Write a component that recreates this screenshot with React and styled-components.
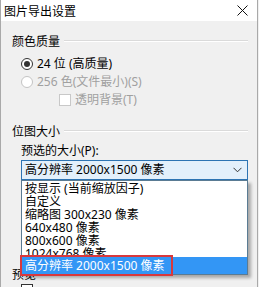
import React from 'react';
import styled, { createGlobalStyle } from 'styled-components';

const listItems = [
  '按显示 (当前缩放因子)',
  '自定义',
  '缩略图 300x230 像素',
  '640x480 像素',
  '800x600 像素',
];

const App = () => {
  return (
    <Window>
      <GlobalStyle />
      <TitleBar>
        <Title>图片导出设置</Title>
        <CloseIcon width="11" height="11" viewBox="0 0 11 11">
          <path d="M0.5 0.5 L10.5 10.5 M10.5 0.5 L0.5 10.5" stroke="#111" strokeWidth="1" fill="none" />
        </CloseIcon>
      </TitleBar>

      <Body>
        <GroupHeader>
          <GroupLabel>颜色质量</GroupLabel>
          <GroupLine />
        </GroupHeader>
        <Indent>
          <OptionRow>
            <Radio checked />
            <OptionText>24 位 (高质量)</OptionText>
          </OptionRow>
          <OptionRow>
            <Radio disabled />
            <OptionText disabled>256 色(文件最小)(S)</OptionText>
          </OptionRow>
          <OptionRow indent={38}>
            <CheckBox disabled />
            <OptionText disabled>透明背景(T)</OptionText>
          </OptionRow>
        </Indent>

        <GroupHeader top={15}>
          <GroupLabel>位图大小</GroupLabel>
          <GroupLine />
        </GroupHeader>
        <Indent>
          <FieldLabel>预选的大小(P):</FieldLabel>
          <ComboWrap>
            <Combo>
              <ComboText>高分辨率 2000x1500 像素</ComboText>
              <svg width="9" height="6" viewBox="0 0 9 6">
                <path d="M0.5 0.8 L4.5 4.8 L8.5 0.8" stroke="#333" strokeWidth="1" fill="none" />
              </svg>
            </Combo>
            <Popup>
              {listItems.map((item) => (
                <ListRow key={item}>{item}</ListRow>
              ))}
              <ListRow clipped>1024x768 像素</ListRow>
              <ListRow selected>高分辨率 2000x1500 像素</ListRow>
              <Marker />
            </Popup>
          </ComboWrap>
        </Indent>

        <GroupHeader top={87}>
          <GroupLabel>预览</GroupLabel>
          <GroupLine />
        </GroupHeader>
        <Indent top={-1}>
          <OptionRow>
            <CheckBox />
          </OptionRow>
        </Indent>
      </Body>
    </Window>
  );
};

export default App;

const GlobalStyle = createGlobalStyle`
  body {
    margin: 0;
    background: #f0f0f0;
    font-family: "Noto Sans", "Noto Sans CJK SC", sans-serif;
  }
`;

const Window = styled.div`
  width: 258px;
  height: 287px;
  box-sizing: border-box;
  border-left: 1px solid #a9a9a9;
  border-right: 1px solid #a9a9a9;
  background: #f0f0f0;
  overflow: hidden;
  display: flex;
  flex-direction: column;
  font-size: 12px;
  color: #000;
`;

const TitleBar = styled.div`
  height: 21px;
  flex-shrink: 0;
  background: #fff;
  display: flex;
  align-items: center;
  justify-content: space-between;
  padding: 0 9px 0 3px;
`;

const Title = styled.span`
  font-size: 12px;
  line-height: 14px;
  font-family: "Noto Sans CJK SC", sans-serif;
`;

const CloseIcon = styled.svg`
  display: block;
`;

const Body = styled.div`
  padding: 13px 9px 0 11px;
`;

const GroupHeader = styled.div`
  display: flex;
  align-items: center;
  gap: 4px;
  height: 14px;
  margin-top: ${(p) => p.top || 0}px;
`;

const GroupLabel = styled.span`
  font-family: "Noto Sans CJK SC", sans-serif;
  font-size: 12px;
  line-height: 14px;
`;

const GroupLine = styled.div`
  flex: 1;
  border-top: 1px solid #dadada;
  border-bottom: 1px solid #fff;
`;

const Indent = styled.div`
  padding-left: 9px;
  padding-top: ${(p) => (p.top !== undefined ? p.top : 7)}px;
`;

const OptionRow = styled.div`
  display: flex;
  align-items: center;
  gap: 4px;
  height: 18px;
  padding-left: ${(p) => p.indent || 0}px;
`;

const Radio = styled.span`
  width: 12px;
  height: 12px;
  box-sizing: border-box;
  border-radius: 50%;
  border: 1px solid ${(p) => (p.disabled ? '#c4c4c4' : '#333')};
  background: #fff;
  display: flex;
  align-items: center;
  justify-content: center;
  &::after {
    content: '';
    width: 6px;
    height: 6px;
    border-radius: 50%;
    background: ${(p) => (p.checked ? '#333' : 'transparent')};
  }
`;

const CheckBox = styled.span`
  width: 12px;
  height: 12px;
  box-sizing: border-box;
  border: 1px solid ${(p) => (p.disabled ? '#c8c8c8' : '#333')};
  background: #fff;
`;

const OptionText = styled.span`
  line-height: 14px;
  color: ${(p) => (p.disabled ? '#a0a0a0' : '#000')};
`;

const FieldLabel = styled.div`
  height: 14px;
  line-height: 14px;
  margin-top: -1px;
`;

const ComboWrap = styled.div`
  position: relative;
  margin-top: 2px;
`;

const Combo = styled.div`
  height: 20px;
  box-sizing: border-box;
  border: 1px solid #2d74b3;
  background: #e3f0fb;
  display: flex;
  align-items: center;
  justify-content: space-between;
  padding: 0 5px 0 3px;
`;

const ComboText = styled.span`
  line-height: 14px;
`;

const Popup = styled.div`
  position: absolute;
  top: 100%;
  left: 0;
  right: 0;
  box-sizing: border-box;
  border: 1px solid #5a7b93;
  background: #fff;
  padding-top: 1px;
  box-shadow: 3px 3px 3px rgba(0, 0, 0, 0.3);
`;

const ListRow = styled.div`
  height: ${(p) => (p.clipped ? 10 : p.selected ? 17 : 13)}px;
  line-height: ${(p) => (p.selected ? 17 : 13)}px;
  overflow: ${(p) => (p.clipped ? 'hidden' : 'visible')};
  padding-left: 3px;
  white-space: nowrap;
  background: ${(p) => (p.selected ? '#3396f5' : 'transparent')};
  color: ${(p) => (p.selected ? '#fff' : '#000')};
`;

const Marker = styled.div`
  position: absolute;
  left: -2px;
  bottom: -2px;
  width: 153px;
  height: 21px;
  box-sizing: border-box;
  border: 2px solid #d9383c;
`;
